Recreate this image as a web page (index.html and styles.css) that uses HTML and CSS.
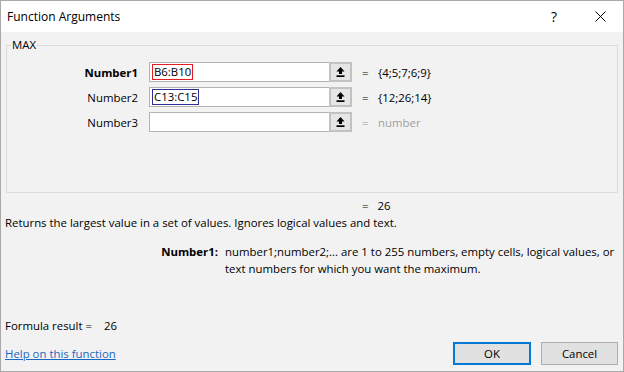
FILE: index.html
```html
<html>
<head>
<meta name="viewport" content="width=device-width, initial-scale=1">
<title>Function Arguments</title>
<link rel="stylesheet" href="styles.css">
</head>
<body>
<div class="window">
	<div class="titlebar">
		<span class="title">Function Arguments</span>
		<span class="caption-btn help">?</span>
		<span class="caption-btn close">
			<svg width="11" height="11" viewBox="0 0 11 11"><path d="M0.5 0.5 L10.5 10.5 M10.5 0.5 L0.5 10.5" stroke="#000" stroke-width="1" fill="none"/></svg>
		</span>
	</div>

	<div class="content">
		<div class="group">
			<span class="legend">MAX</span>
			<div class="args">
				<span class="arg-name bold">Number1</span>
				<div class="field">
					<div class="field-input"><span class="ref ref-red">B6:B10</span></div>
					<span class="collapse-btn"><svg width="9" height="10" viewBox="0 0 9 10"><path d="M4.5 0 L8.5 4.5 H6 V7 H3 V4.5 H0.5 Z" fill="#000"/><rect x="0.5" y="8.3" width="8" height="1.7" fill="#000"/></svg></span>
				</div>
				<span class="eq">=</span>
				<span class="val">{4;5;7;6;9}</span>

				<span class="arg-name">Number2</span>
				<div class="field">
					<div class="field-input"><span class="ref ref-blue">C13:C15</span></div>
					<span class="collapse-btn"><svg width="9" height="10" viewBox="0 0 9 10"><path d="M4.5 0 L8.5 4.5 H6 V7 H3 V4.5 H0.5 Z" fill="#000"/><rect x="0.5" y="8.3" width="8" height="1.7" fill="#000"/></svg></span>
				</div>
				<span class="eq">=</span>
				<span class="val">{12;26;14}</span>

				<span class="arg-name">Number3</span>
				<div class="field">
					<div class="field-input"></div>
					<span class="collapse-btn"><svg width="9" height="10" viewBox="0 0 9 10"><path d="M4.5 0 L8.5 4.5 H6 V7 H3 V4.5 H0.5 Z" fill="#000"/><rect x="0.5" y="8.3" width="8" height="1.7" fill="#000"/></svg></span>
				</div>
				<span class="eq muted">=</span>
				<span class="val muted">number</span>
			</div>
		</div>

		<div class="total"><span class="eq">=</span><span class="total-val">26</span></div>
		<p class="desc">Returns the largest value in a set of values. Ignores logical values and text.</p>

		<div class="arg-help">
			<span class="arg-help-name">Number1:</span>
			<span class="arg-help-text">number1;number2;... are 1 to 255 numbers, empty cells, logical values, or text numbers for which you want the maximum.</span>
		</div>

		<div class="footer">
			<div class="result">Formula result =<span class="result-val">26</span></div>
			<div class="actions">
				<a class="help-link" href="#">Help on this function</a>
				<button class="btn btn-default">OK</button>
				<button class="btn">Cancel</button>
			</div>
		</div>
	</div>
</div>
</body>
</html>
```

FILE: styles.css
```css
html, body {
margin: 0;
padding: 0;
}

body {
font-family: "Open Sans", "Noto Sans", sans-serif;
font-size: 11.4px;
color: #000;
}

.window {
width: 624px;
height: 372px;
box-sizing: border-box;
border: 1px solid #a9a9a9;
background-color: #f2f2f2;
display: flex;
flex-direction: column;
}

.titlebar {
height: 31px;
background-color: white;
display: flex;
align-items: center;
padding-left: 6px;
}

.title {
font-size: 12px;
flex: 1;
}

.caption-btn {
width: 46px;
height: 31px;
display: flex;
align-items: center;
justify-content: center;
}

.help {
font-size: 14px;
}

.content {
flex: 1;
display: flex;
flex-direction: column;
padding: 0 5px 6px 4px;
}

.group {
position: relative;
margin: 13px 0 0 1px;
height: 148px;
box-sizing: border-box;
border: 1px solid #dcdcdc;
}

.legend {
position: absolute;
top: -9px;
left: 4px;
padding: 0 1px;
line-height: 16px;
background-color: #f2f2f2;
}

.args {
display: grid;
grid-template-columns: 134px 203px 10px auto;
grid-auto-rows: 20px;
row-gap: 5px;
column-gap: 8px;
padding-top: 16px;
align-items: center;
}

.arg-name {
text-align: right;
padding-right: 3px;
}

.bold {
font-weight: bold;
}

.field {
display: flex;
height: 20px;
box-sizing: border-box;
border: 1px solid #b4b4b4;
background-color: white;
}

.field-input {
flex: 1;
display: flex;
align-items: center;
padding-left: 2px;
}

.ref {
line-height: 14px;
padding: 0 1px;
}

.ref-red {
border: 1px solid #e51c23;
}

.ref-blue {
border: 1px solid #2e2e96;
}

.collapse-btn {
width: 23px;
box-sizing: border-box;
border: 2px solid #c2c2c2;
margin: -1px -1px -1px 0;
height: 20px;
background-color: #e6e6e6;
display: flex;
align-items: center;
justify-content: center;
}

.eq {
padding-left: 2px;
}

.muted {
color: #a0a0a0;
}

.total {
margin-top: 5px;
padding-left: 355px;
line-height: 16px;
}

.total-val {
margin-left: 9px;
}

.desc {
margin: 1px 0 0;
line-height: 16px;
}

.arg-help {
display: flex;
margin-top: 12px;
line-height: 17px;
}

.arg-help-name {
width: 213px;
flex-shrink: 0;
text-align: right;
font-weight: bold;
}

.arg-help-text {
margin-left: 7px;
width: 396px;
flex-shrink: 0;
}

.footer {
margin-top: auto;
}

.result {
line-height: 16px;
}

.result-val {
margin-left: 12px;
}

.actions {
display: flex;
align-items: center;
margin-top: 8px;
height: 23px;
}

.help-link {
flex: 1;
color: #1a67c2;
text-decoration: underline;
}

.btn {
font-family: inherit;
font-size: 11.4px;
width: 77px;
height: 23px;
margin-left: 10px;
background-color: #e1e1e1;
border: 1px solid #adadad;
padding: 0;
color: #000;
}

.btn-default {
width: 78px;
border: 2px solid #0078d7;
}
```
